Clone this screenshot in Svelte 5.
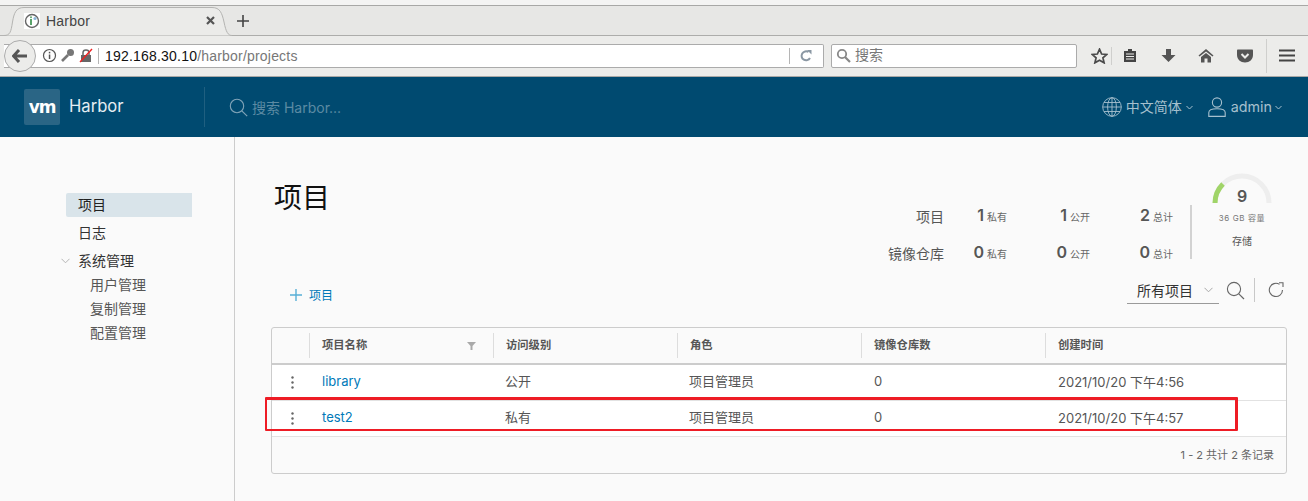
<script>
  const cols = ['访问级别', '角色', '镜像仓库数', '创建时间']
  const rows = [
    { name: 'library', access: '公开', role: '项目管理员', repos: 0, time: '2021/10/20 下午4:56' },
    { name: 'test2', access: '私有', role: '项目管理员', repos: 0, time: '2021/10/20 下午4:57' },
  ]
  const stats = [
    { label: '项目', vals: [1, 1, 2] },
    { label: '镜像仓库', vals: [0, 0, 0] },
  ]
  const kinds = ['私有', '公开', '总计']
</script>

<div class="page">
  <div class="topstrip"></div>

  <div class="tabbar">
    <div class="tab">
      <svg class="tab-shape" width="232" height="30" viewBox="0 0 232 30">
        <path d="M0 29.5 H4 C10 29.5 11 26 12.5 16 C14 7 16 1.5 24 1.5 H212 C220 1.5 222 7 224 16 C226 26 228 29.5 232 29.5" fill="#ebebe9" stroke="#b4b4b2" />
      </svg>
      <svg class="favicon" width="16" height="16" viewBox="0 0 16 16">
        <rect width="16" height="16" fill="#fff" />
        <circle cx="8" cy="8" r="6.5" fill="none" stroke="#666" stroke-width="1.4" />
        <rect x="6" y="6" width="2" height="6" fill="#5aa36a" />
        <circle cx="7" cy="4.3" r="1" fill="#5aa36a" />
        <circle cx="11" cy="5.5" r="1.6" fill="#8ab8d8" />
      </svg>
      <span class="tab-title">Harbor</span>
      <svg class="tab-close" width="9" height="9" viewBox="0 0 9 9">
        <path d="M1 1 L8 8 M8 1 L1 8" stroke="#555" stroke-width="2.2" />
      </svg>
    </div>
    <svg class="newtab" width="14" height="14" viewBox="0 0 14 14">
      <path d="M7 1 V13 M1 7 H13" stroke="#444" stroke-width="1.6" />
    </svg>
  </div>

  <div class="navbar">
    <div class="urlbar">
      <div class="back">
        <svg width="16" height="14" viewBox="0 0 16 14">
          <path d="M7 1 L1.5 7 L7 13 M2 7 H15" fill="none" stroke="#555" stroke-width="3" />
        </svg>
      </div>
      <svg class="info" width="15" height="15" viewBox="0 0 15 15">
        <circle cx="7.5" cy="7.5" r="6" fill="#fff" stroke="#555" stroke-width="1.2" />
        <rect x="6.8" y="6.5" width="1.5" height="4.5" fill="#555" />
        <rect x="6.8" y="3.8" width="1.5" height="1.6" fill="#555" />
      </svg>
      <svg class="key" width="15" height="15" viewBox="0 0 15 15">
        <circle cx="10.5" cy="4.5" r="3.5" fill="#777" />
        <path d="M8 7 L2 13" stroke="#777" stroke-width="2.6" />
      </svg>
      <svg class="lock" width="14" height="15" viewBox="0 0 14 15">
        <rect x="2" y="7" width="10" height="7" fill="#666" />
        <path d="M4 7 V4.5 C4 1 10 1 10 4.5 V7" fill="none" stroke="#666" stroke-width="1.5" />
        <path d="M1 14 L13 1" stroke="#e22" stroke-width="1.4" />
      </svg>
      <i class="url-sep"></i>
      <span class="url"><b>192.168.30.10</b>/harbor/projects</span>
      <i class="url-sep end"></i>
      <svg class="reload" width="14" height="14" viewBox="0 0 14 14">
        <path d="M11 9 A4.5 4.5 0 1 1 9.5 3" fill="none" stroke="#8a97a3" stroke-width="2" />
        <path d="M8 1 H12.5 V5.5 Z" fill="#8a97a3" />
      </svg>
    </div>
    <div class="searchbar">
      <svg width="15" height="15" viewBox="0 0 15 15">
        <circle cx="6" cy="6" r="4.2" fill="none" stroke="#888" stroke-width="1.8" />
        <path d="M9 9 L14 14" stroke="#888" stroke-width="2.2" />
      </svg>
      <span>搜索</span>
    </div>
    <div class="tools">
      <svg class="t-star" width="17" height="16" viewBox="0 0 17 16">
        <path d="M8.5 1.2 L10.6 6 L15.8 6.4 L11.9 9.8 L13.1 14.8 L8.5 12.2 L3.9 14.8 L5.1 9.8 L1.2 6.4 L6.4 6 Z" fill="none" stroke="#4a4a4a" stroke-width="1.7" />
      </svg>
      <i class="tool-sep"></i>
      <svg class="t-list" width="14" height="15" viewBox="0 0 14 15">
        <path d="M1 3 H5 V1 H9 V3 H13 V14 H1 Z" fill="#444" />
        <path d="M3 6 H11 M3 8.5 H11 M3 11 H11" stroke="#ececea" stroke-width="1" />
      </svg>
      <svg class="t-down" width="15" height="15" viewBox="0 0 15 15">
        <path d="M5 1 H10 V7 H14.5 L7.5 14 L0.5 7 H5 Z" fill="#555" />
      </svg>
      <svg class="t-home" width="16" height="15" viewBox="0 0 16 15">
        <path d="M8 1 L15.5 7.5 L14.5 8.5 L8 3.5 L1.5 8.5 L0.5 7.5 Z" fill="#555" />
        <path d="M3 9 L8 5 L13 9 V14.5 H9.5 V10.5 H6.5 V14.5 H3 Z" fill="#555" />
      </svg>
      <svg class="t-pocket" width="16" height="14" viewBox="0 0 16 14">
        <path d="M1 0.5 H15 C15.6 0.5 16 1 16 1.5 V6 C16 10.5 12.5 13.5 8 13.5 C3.5 13.5 0 10.5 0 6 V1.5 C0 1 0.4 0.5 1 0.5 Z" fill="#555" />
        <path d="M4.5 5 L8 8.5 L11.5 5" fill="none" stroke="#ececea" stroke-width="2" />
      </svg>
      <i class="tool-sep tall"></i>
      <svg class="t-menu" width="16" height="13" viewBox="0 0 16 13">
        <path d="M0 1.5 H16 M0 6.5 H16 M0 11.5 H16" stroke="#444" stroke-width="2.2" />
      </svg>
    </div>
  </div>

  <header class="appbar">
    <div class="brand">
      <span class="logo">vm</span>
      <span class="brand-name">Harbor</span>
    </div>
    <div class="global-search">
      <svg width="19" height="19" viewBox="0 0 19 19">
        <circle cx="8" cy="8" r="6.7" fill="none" stroke="#7fa3b7" stroke-width="1.1" />
        <path d="M12.8 12.8 L18.2 18.2" stroke="#7fa3b7" stroke-width="1.2" />
      </svg>
      <span>搜索 Harbor...</span>
    </div>
    <div class="appbar-right">
      <svg class="globe" width="20" height="20" viewBox="0 0 20 20" fill="none" stroke="#a6c0ce" stroke-width="0.9">
        <circle cx="10" cy="10" r="9.3" />
        <ellipse cx="10" cy="10" rx="4.4" ry="9.3" />
        <path d="M10 .7 V19.3 M.7 10 H19.3 M2 5.5 H18 M2 14.5 H18" />
      </svg>
      <span class="lang">中文简体</span>
      <svg class="caret first" width="7" height="5" viewBox="0 0 7 5"><path d="M.5 1 L3.5 4 L6.5 1" fill="none" stroke="#a6c0ce" /></svg>
      <svg class="user" width="18" height="20" viewBox="0 0 18 20" fill="none" stroke="#a6c0ce" stroke-width="1.1">
        <circle cx="9" cy="5.5" r="4.6" />
        <path d="M.8 19.4 V15.5 C.8 13 5 11.8 9 11.8 C13 11.8 17.2 13 17.2 15.5 V19.4 Z" />
      </svg>
      <span class="admin">admin</span>
      <svg class="caret" width="7" height="5" viewBox="0 0 7 5"><path d="M.5 1 L3.5 4 L6.5 1" fill="none" stroke="#a6c0ce" /></svg>
    </div>
  </header>

  <div class="body">
    <nav class="side">
      <div class="side-item active">项目</div>
      <div class="side-item">日志</div>
      <div class="side-item group">
        <svg width="9" height="6" viewBox="0 0 9 6"><path d="M.5 .8 L4.5 4.8 L8.5 .8" fill="none" stroke="#b5b5b5" /></svg>
        系统管理
      </div>
      <div class="side-sub">用户管理</div>
      <div class="side-sub">复制管理</div>
      <div class="side-sub">配置管理</div>
    </nav>

    <main class="content">
      <div class="head">
        <h1>项目</h1>
        <div class="summary">
          <div class="stats">
            {#each stats as s}
              <div class="stat-row">
                <span class="stat-label">{s.label}</span>
                {#each s.vals as v, i}
                  <span class="stat-cell"><b>{v}</b><small>{kinds[i]}</small></span>
                {/each}
              </div>
            {/each}
          </div>
          <div class="storage">
            <svg class="gauge" width="60" height="30" viewBox="0 0 60 30">
              <path d="M3 30 A27 27 0 0 1 57 30" fill="none" stroke="#eeeeee" stroke-width="5" />
              <path d="M3 30 A27 27 0 0 1 11 11" fill="none" stroke="#a0d468" stroke-width="5" />
            </svg>
            <span class="gauge-num">9</span>
            <span class="cap">36 GB 容量</span>
            <span class="cap-name">存储</span>
          </div>
        </div>
      </div>

      <div class="toolbar">
        <div class="add">
          <svg width="12" height="12" viewBox="0 0 12 12"><path d="M6 0 V12 M0 6 H12" stroke="#57afd6" stroke-width="1.4" /></svg>
          <span>项目</span>
        </div>
        <div class="filter">
          <div class="select">
            <span>所有项目</span>
            <svg width="9" height="6" viewBox="0 0 9 6"><path d="M.5 .8 L4.5 4.8 L8.5 .8" fill="none" stroke="#a8a8a8" /></svg>
          </div>
          <svg class="find" width="19" height="19" viewBox="0 0 19 19">
            <circle cx="8" cy="8" r="6.6" fill="none" stroke="#666" stroke-width="1.1" />
            <path d="M12.8 12.8 L18 18" stroke="#666" stroke-width="1.2" />
          </svg>
          <i class="filter-sep"></i>
          <svg class="refresh" width="16" height="16" viewBox="0 0 16 16" fill="none" stroke="#666" stroke-width="1.1">
            <path d="M14.5 8 A6.6 6.6 0 1 1 11.5 2.4" />
            <path d="M11 .8 H15 V5" />
          </svg>
        </div>
      </div>

      <div class="grid">
        <div class="grid-head">
          <div class="cell-act"></div>
          <div class="hcell name"><span>项目名称</span>
            <svg width="9" height="8" viewBox="0 0 9 8"><path d="M0 0 H9 L5.5 4 V8 H3.5 V4 Z" fill="#a9a9a9" /></svg>
          </div>
          {#each cols as c}
            <div class="hcell">{c}</div>
          {/each}
        </div>
        {#each rows as r}
          <div class="grid-row">
            <div class="cell-act">
              <svg width="3" height="13" viewBox="0 0 3 13" fill="#666">
                <circle cx="1.5" cy="1.5" r="1.2" /><circle cx="1.5" cy="6.5" r="1.2" /><circle cx="1.5" cy="11.5" r="1.2" />
              </svg>
            </div>
            <div class="cell"><span class="link">{r.name}</span></div>
            <div class="cell cjk">{r.access}</div>
            <div class="cell cjk">{r.role}</div>
            <div class="cell">{r.repos}</div>
            <div class="cell">{r.time}</div>
          </div>
        {/each}
        <div class="grid-foot">1 - 2 共计 2 条记录</div>
        <div class="mark"></div>
      </div>
    </main>
  </div>
</div>

<style>
  :global(body) {
    margin: 0;
    background: #fafafa;
  }

  .page {
    width: 1308px;
    height: 501px;
    overflow: hidden;
    display: flex;
    flex-direction: column;
    font-family: Inter, "Noto Sans CJK SC", sans-serif;
    color: #565656;
  }

  .topstrip {
    background: #f4f4f3;
    border-bottom: 1px solid #a8a8a6;
    box-sizing: border-box;
    flex: none;
    height: 6px;
  }

  .tabbar {
    height: 30px;
    flex: none;
    display: flex;
    align-items: center;
    background: #e7e7e5;
    border-bottom: 1px solid #adadab;
    box-sizing: border-box;
  }

  .tab {
    position: relative;
    width: 232px;
    height: 30px;
    display: flex;
    align-items: center;
    padding: 0 17px 0 24px;
    box-sizing: border-box;
    font-family: "Liberation Sans", sans-serif;
    font-size: 14px;
    color: #444;
  }

  .tab-shape {
    position: absolute;
    left: 0;
    top: 0;
  }

  .favicon, .tab-title, .tab-close {
    position: relative;
  }

  .tab-title {
    margin-left: 6px;
    flex: 1;
    letter-spacing: 0.2px;
  }

  .newtab {
    margin-left: 4px;
  }

  .navbar {
    height: 41px;
    flex: none;
    display: flex;
    align-items: center;
    background: #ececea;
    border-bottom: 1px solid #a9a9a7;
    box-sizing: border-box;
    padding: 0 0 1px 4px;
  }

  .urlbar {
    width: 820px;
    height: 24px;
    box-sizing: border-box;
    background: #fff;
    border: 1px solid #ababab;
    border-left: none;
    border-radius: 0 2px 2px 0;
    display: flex;
    align-items: center;
    font-family: "Liberation Sans", sans-serif;
    font-size: 14px;
    position: relative;
  }

  .back {
    width: 32px;
    height: 32px;
    margin: -4px 0;
    box-sizing: border-box;
    border: 1px solid #ababab;
    border-radius: 50%;
    background: #ececea;
    display: flex;
    align-items: center;
    justify-content: center;
    flex: none;
  }

  .info {
    margin-left: 6px;
  }

  .key {
    margin-left: 3px;
  }

  .lock {
    margin-left: 4px;
  }

  .url-sep {
    width: 1px;
    height: 16px;
    background: #b5b5b5;
    margin: 0 6px 0 5px;
  }

  .url {
    flex: 1;
    color: #777;
    letter-spacing: 0.2px;
  }

  .url b {
    font-weight: 400;
    color: #111;
  }

  .url-sep.end {
    margin: 0 9px 0 0;
  }

  .reload {
    margin-right: 10px;
  }

  .searchbar {
    width: 246px;
    height: 24px;
    margin-left: 7px;
    box-sizing: border-box;
    background: #fff;
    border: 1px solid #ababab;
    border-radius: 2px;
    display: flex;
    align-items: center;
    gap: 4px;
    padding-left: 4px;
    font-size: 14px;
    color: #777;
  }

  .searchbar span {
    padding-bottom: 4px;
  }

  .tools {
    display: flex;
    align-items: center;
    height: 100%;
  }

  .t-star { margin-left: 14px; }
  .tool-sep { width: 1px; height: 18px; background: #cfcfcd; margin-left: 3px; }
  .tool-sep.tall { height: 34px; margin-left: 13px; }
  .t-list { margin-left: 11px; }
  .t-down { margin-left: 24px; }
  .t-home { margin-left: 22px; }
  .t-pocket { margin-left: 23px; }
  .t-menu { margin-left: 12px; }

  .appbar {
    height: 60px;
    flex: none;
    background: #004a70;
    display: flex;
    align-items: center;
    padding: 0 26px 0 24px;
  }

  .brand {
    display: flex;
    align-items: center;
    width: 180px;
    height: 40px;
    border-right: 1px solid #1f5f80;
    box-sizing: content-box;
  }

  .logo {
    width: 36px;
    height: 36px;
    border-radius: 2px;
    background: #2a6585;
    color: #fff;
    display: flex;
    align-items: center;
    justify-content: center;
    font-family: "DejaVu Sans", sans-serif;
    font-weight: 700;
    font-size: 17px;
    letter-spacing: -1.2px;
  }

  .brand-name {
    margin-left: 9px;
    margin-bottom: 2px;
    font-size: 16.6px;
    color: #e4edf2;
  }

  .global-search {
    display: flex;
    align-items: center;
    margin-left: 24px;
    gap: 4px;
    font-size: 14px;
    color: #5c8aa3;
    flex: 1;
  }

  .appbar-right {
    display: flex;
    align-items: center;
    color: #a6c0ce;
  }

  .lang {
    margin-left: 4px;
    font-size: 14px;
    margin-bottom: 2px;
  }

  .appbar-right .caret {
    margin-left: 3px;
  }

  .appbar-right .caret.first {
    margin-left: 4.5px;
  }

  .user {
    margin-left: 14.5px;
  }

  .admin {
    margin-left: 5px;
    font-size: 14.3px;
    margin-bottom: 2px;
  }

  .body {
    flex: 1;
    display: flex;
    min-height: 0;
  }

  .side {
    width: 235px;
    flex: none;
    box-sizing: border-box;
    border-right: 1px solid #ccc;
    padding: 56px 42px 0 66px;
    font-size: 14px;
    color: #333;
  }

  .side-item {
    height: 24px;
    line-height: 23px;
    padding-left: 12px;
    margin-bottom: 4px;
    position: relative;
  }

  .side-item.active {
    background: #d9e4ea;
    border-radius: 2px 0 0 2px;
    color: #222;
  }

  .side-item.group svg {
    position: absolute;
    left: -5px;
    top: 9px;
  }

  .side-sub {
    height: 24px;
    line-height: 23px;
    padding-left: 24px;
    color: #565656;
  }

  .side-item.group {
    margin-bottom: 0;
  }

  .content {
    flex: 1;
    padding: 0 21px 0 37px;
    display: flex;
    flex-direction: column;
    min-width: 0;
  }

  .head {
    height: 138px;
    display: flex;
    justify-content: space-between;
    flex: none;
  }

  h1 {
    margin: 42px 0 0 2px;
    font-size: 28px;
    font-weight: 400;
    line-height: 38px;
    color: #111;
  }

  .summary {
    display: flex;
    align-items: flex-start;
    padding-top: 36px;
    margin-right: 5px;
  }

  .stats {
    margin-top: 32px;
    border-right: 2px solid #d2d2d2;
    height: 54px;
    display: flex;
    flex-direction: column;
    gap: 17px;
    padding-right: 17px;
  }

  .stat-row {
    display: flex;
    align-items: center;
    height: 19px;
    margin-top: 1px;
    font-size: 14px;
  }

  .stat-label {
    width: 72px;
    text-align: right;
  }

  .stat-cell {
    width: 83px;
    display: flex;
    align-items: baseline;
    justify-content: flex-end;
    gap: 3px;
    color: #565656;
  }

  .stat-label + .stat-cell {
    width: 63px;
  }

  .stat-cell b {
    font-size: 16px;
    line-height: 19px;
    font-weight: 600;
  }

  .stat-cell small {
    font-size: 10px;
    width: 20px;
    color: #666;
  }

  .storage {
    width: 80px;
    position: relative;
    display: flex;
    flex-direction: column;
    align-items: center;
    margin-left: 10px;
  }

  .gauge-num {
    position: absolute;
    top: 13px;
    font-size: 16px;
    font-weight: 600;
    line-height: 20px;
  }

  .cap {
    margin-top: 9px;
    font-size: 8px;
    line-height: 12px;
    letter-spacing: 0.6px;
    color: #777;
  }

  .cap-name {
    margin-top: 10px;
    font-size: 10px;
    line-height: 14px;
  }

  .toolbar {
    height: 52px;
    flex: none;
    display: flex;
    justify-content: space-between;
    align-items: flex-start;
  }

  .add {
    display: flex;
    align-items: center;
    gap: 7px;
    margin: 12px 0 0 18px;
    font-size: 12px;
    color: #0079b8;
    height: 16px;
  }

  .add span {
    padding-bottom: 2px;
  }

  .filter {
    display: flex;
    align-items: center;
    height: 30px;
    margin-right: 3px;
  }

  .select {
    width: 92px;
    height: 27px;
    margin-top: 1px;
    box-sizing: border-box;
    border-bottom: 1px solid #9a9a9a;
    display: flex;
    align-items: center;
    justify-content: space-between;
    padding: 0 6px 0 10px;
    font-size: 14px;
    color: #333;
  }

  .find {
    margin-left: 7px;
  }

  .filter-sep {
    width: 1px;
    height: 24px;
    background: #c8c8c8;
    margin: 0 13px 0 9px;
  }

  .grid {
    position: relative;
    width: 1016px;
    height: 147px;
    flex: none;
    box-sizing: border-box;
    border: 1px solid #ccc;
    border-radius: 3px;
    margin-left: -1px;
    font-size: 13px;
    background: #fafafa;
  }

  .grid-head {
    height: 37px;
    box-sizing: border-box;
    display: grid;
    grid-template-columns: 37px 184px 184px 184px 184px 1fr;
    align-items: center;
    border-bottom: 2px solid #ccc;
    font-size: 11.3px;
    font-weight: 600;
    color: #565656;
  }

  .hcell {
    height: 25px;
    line-height: 25px;
    padding-left: 12px;
    border-left: 1px solid #ddd;
    display: flex;
    justify-content: space-between;
    align-items: center;
    padding-right: 17px;
  }

  .grid-row {
    height: 36px;
    box-sizing: border-box;
    display: grid;
    grid-template-columns: 37px 184px 184px 184px 184px 1fr;
    align-items: center;
    background: #fff;
    border-bottom: 1px solid #e2e2e2;
  }

  .grid-row:last-of-type {
    height: 37px;
    border-bottom: 2px solid #ccc;
  }

  .cell {
    padding: 0 0 3px 13px;
    color: #565656;
  }

  .cell.cjk {
    padding: 0 0 5px 12px;
  }

  .cell-act {
    display: flex;
    justify-content: center;
    padding-left: 4px;
  }

  .link {
    color: #0079b8;
  }

  .grid-foot {
    height: 35px;
    line-height: 36px;
    text-align: right;
    padding-right: 12px;
    font-size: 11px;
    color: #666;
  }

  .mark {
    position: absolute;
    left: -7px;
    top: 69px;
    width: 973px;
    height: 34px;
    box-sizing: border-box;
    border: solid #ee1c25;
    border-width: 3px 3px 2px 2px;
    border-radius: 1px;
  }
</style>
